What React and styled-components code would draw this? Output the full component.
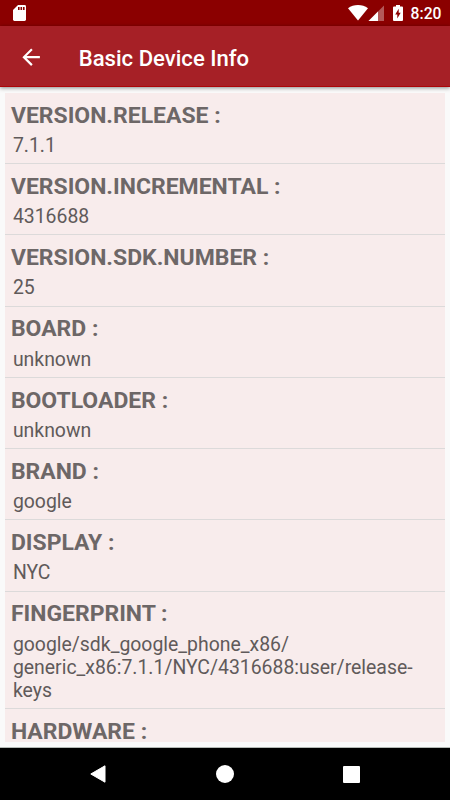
import styled, { createGlobalStyle } from "styled-components";

const GlobalStyle = createGlobalStyle`
  * {
    box-sizing: border-box;
  }
  body {
    margin: 0;
    background-color: #fafafa;
    font-family: "Roboto", sans-serif;
  }
`;

const Screen = styled.div`
  display: flex;
  flex-direction: column;
  width: 450px;
  height: 800px;
  overflow: hidden;
`;

const StatusBar = styled.div`
  display: flex;
  align-items: center;
  justify-content: space-between;
  flex: none;
  height: 26px;
  padding: 0 8.5px 0 13px;
  background-color: #8b0000;
  color: #fff;

  svg {
    display: block;
  }
`;

const StatusIcons = styled.div`
  display: flex;
  align-items: center;
`;

const Battery = styled.span`
  margin: 0 7.5px 0 9px;
`;

const Clock = styled.span`
  font-size: 15.7px;
  font-weight: 500;
  line-height: 26px;
  padding-top: 2px;
`;

const Toolbar = styled.header`
  display: flex;
  align-items: center;
  flex: none;
  height: 61px;
  padding-left: 17.5px;
  background-color: #a62026;
  border-bottom: 1px solid #ac0508;
  box-shadow: 0 1px 4px rgba(0, 0, 0, 0.45);
  color: #fff;
  z-index: 1;
`;

const BackButton = styled.button`
  display: flex;
  margin-top: 2px;
  padding: 0;
  border: none;
  background: none;
  color: inherit;
`;

const Title = styled.h1`
  margin: 4px 0 0 35px;
  font-size: 22.1px;
  font-weight: 500;
`;

const Content = styled.main`
  flex: 1;
  min-height: 0;
  padding: 6px 5.4px 5px;
  border-bottom: 1px solid #b4bab6;
`;

const List = styled.ul`
  height: 100%;
  margin: 0;
  padding: 0;
  overflow: hidden;
  list-style: none;
  background-color: #f8ecec;
`;

const Row = styled.li`
  padding: 9.7px 5.5px 6.25px;
  border-bottom: 1px solid #dcdada;
`;

const Label = styled.div`
  font-size: 22.96px;
  font-weight: 700;
  line-height: 26px;
  color: #6d6767;
`;

const Value = styled.div`
  padding: 5.3px 2px 0;
  font-size: 19.42px;
  line-height: 23px;
  color: #605a5a;
  white-space: pre-line;
`;

const NavBar = styled.nav`
  display: flex;
  align-items: center;
  justify-content: center;
  gap: 109.5px;
  flex: none;
  height: 52px;
  background-color: #000;

  svg {
    display: block;
  }
`;

const items = [
  { label: "VERSION.RELEASE", value: "7.1.1" },
  { label: "VERSION.INCREMENTAL", value: "4316688" },
  { label: "VERSION.SDK.NUMBER", value: "25" },
  { label: "BOARD", value: "unknown" },
  { label: "BOOTLOADER", value: "unknown" },
  { label: "BRAND", value: "google" },
  { label: "DISPLAY", value: "NYC" },
  {
    label: "FINGERPRINT",
    value:
      "google/sdk_google_phone_x86/\ngeneric_x86:7.1.1/NYC/4316688:user/release-\nkeys",
  },
  { label: "HARDWARE" },
];

const SdCardIcon = () => (
  <svg width="13" height="16" viewBox="0 0 13 16">
    <path
      d="M5 0H11.6Q13 0 13 1.4V14.6Q13 16 11.6 16H1.4Q0 16 0 14.6V5Z"
      fill="#fff"
    />
    <path d="M5 2h1.6v3H5zM7.5 2h1.6v3H7.5zM10 2h1.6v3H10z" fill="#8b0000" />
  </svg>
);

const WifiIcon = () => (
  <svg width="20" height="16" viewBox="0 0 20 16">
    <path d="M0 3.3Q4.4 0 10 0T20 3.3L10 15.5Z" fill="#fff" />
  </svg>
);

const SignalIcon = () => (
  <svg width="16" height="16" viewBox="0 0 16 16">
    <path d="M0.5 16L16 0.5V16Z" fill="#fff" opacity="0.35" />
    <path d="M0.5 16L10 6.5V16Z" fill="#fff" />
  </svg>
);

const BatteryIcon = () => (
  <svg width="10" height="16" viewBox="0 0 10 16">
    <path
      d="M3 0H7V1.5H9Q10 1.5 10 2.5V15Q10 16 9 16H1Q0 16 0 15V2.5Q0 1.5 1 1.5H3Z"
      fill="#fff"
    />
    <path d="M5.7 3.8V7.8H7.7L4.3 13.6V9.6H2.2Z" fill="#8b0000" />
  </svg>
);

const App = () => {
  return (
    <Screen>
      <GlobalStyle />
      <StatusBar>
        <SdCardIcon />
        <StatusIcons>
          <WifiIcon />
          <SignalIcon />
          <Battery>
            <BatteryIcon />
          </Battery>
          <Clock>8:20</Clock>
        </StatusIcons>
      </StatusBar>

      <Toolbar>
        <BackButton aria-label="Back">
          <svg width="26.25" height="26.25" viewBox="0 0 24 24">
            <path
              d="M20 11H7.83l5.59-5.59L12 4l-8 8 8 8 1.41-1.41L7.83 13H20v-2z"
              fill="#fff"
            />
          </svg>
        </BackButton>
        <Title>Basic Device Info</Title>
      </Toolbar>

      <Content>
        <List>
          {items.map(({ label, value }) => (
            <Row key={label}>
              <Label>{label} :</Label>
              {value && <Value>{value}</Value>}
            </Row>
          ))}
        </List>
      </Content>

      <NavBar>
        <svg width="16" height="18" viewBox="0 0 16 18">
          <path
            d="M15 0.8V17.2L0.8 9Z"
            fill="#fff"
            stroke="#fff"
            strokeLinejoin="round"
          />
        </svg>
        <svg width="18" height="18" viewBox="0 0 18 18">
          <circle cx="9" cy="9" r="9" fill="#fff" />
        </svg>
        <svg width="17" height="17" viewBox="0 0 17 17">
          <rect width="17" height="17" rx="1" fill="#fff" />
        </svg>
      </NavBar>
    </Screen>
  );
};

export default App;
